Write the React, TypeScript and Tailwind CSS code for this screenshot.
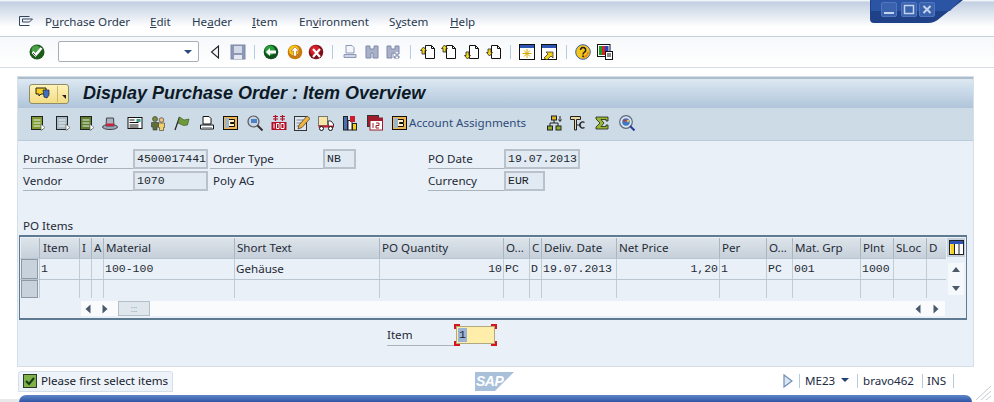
import type { ReactNode } from 'react';

const Svg = ({ children, className = '', w = 16, h = 16 }: { children: ReactNode; className?: string; w?: number; h?: number }) => (
  <svg width={w} height={h} viewBox={`0 0 ${w} ${h}`} className={`shrink-0 ${className}`} shapeRendering="geometricPrecision">
    {children}
  </svg>
);

const Sep = ({ className = '' }: { className?: string }) => <div className={`w-px h-[14px] bg-[#b5cbe0] shrink-0 ${className}`} />;

// standard toolbar
const CheckIcon = ({ className }: { className?: string }) => (
  <Svg className={className}>
    <circle cx="8" cy="8" r="7.5" fill="#1c5b1c" />
    <circle cx="7" cy="6" r="4.5" fill="#49a049" />
    <path d="M3.5 8l3 3 6-7" fill="none" stroke="#fff" strokeWidth="2.6" />
    <path d="M4 9l2.6 2.6" stroke="#111" strokeWidth="0.8" />
  </Svg>
);
const BackTri = ({ className }: { className?: string }) => (
  <Svg className={className} w={10} h={14}>
    <path d="M8.5 1v12L1.5 7z" fill="#f4f6f8" stroke="#222" strokeWidth="1.1" />
  </Svg>
);
const SaveIcon = ({ className }: { className?: string }) => (
  <Svg className={className}>
    <rect x="1" y="1" width="14" height="14" fill="#8d98b8" stroke="#7f89aa" />
    <rect x="4" y="2" width="8" height="7" fill="#d4d9e8" />
    <rect x="4" y="11" width="8" height="4" fill="#e6e9f2" />
  </Svg>
);
const RoundIcon = ({ fill, dark, className, children }: { fill: string; dark: string; className?: string; children: ReactNode }) => (
  <Svg className={className}>
    <circle cx="8" cy="8" r="7.3" fill={dark} />
    <circle cx="7" cy="6.5" r="5" fill={fill} />
    {children}
  </Svg>
);
const PrintGray = ({ className }: { className?: string }) => (
  <Svg className={className}>
    <path d="M4 1.5h6l2 2V9H4z" fill="#f4f6fa" stroke="#8d98b8" />
    <path d="M2 10.5h12v3H2z" fill="#cfd5e4" stroke="#8d98b8" />
  </Svg>
);
const Binoc = ({ plus, className }: { plus?: boolean; className?: string }) => (
  <Svg className={className}>
    <path d="M2 2h4v3h4V2h4v12h-5V9H7v5H2z" fill="#a9b1c9" stroke="#7f89aa" />
    {plus && <path d="M12 8v6M9 11h6" stroke="#fff" strokeWidth="2" />}
    {plus && <path d="M12 9v4M10 11h4" stroke="#7f89aa" strokeWidth="1" />}
  </Svg>
);
const PageIcon = ({ dy, down, className }: { dy: number; down?: boolean; className?: string }) => (
  <Svg className={className}>
    <path d="M5.5 1.5h6l3 3v10h-9z" fill="#fff" stroke="#111" />
    <path d="M11.5 1.5v3h3" fill="none" stroke="#111" />
    <path
      d={down ? `M3.5 ${dy + 7}L6.5 ${dy + 3.5}H5V${dy}H2V${dy + 3.5}H0.5z` : `M3.5 ${dy}L6.5 ${dy + 3.5}H5V${dy + 7}H2V${dy + 3.5}H0.5z`}
      fill="#f5d818"
      stroke="#222"
      strokeWidth="0.8"
    />
  </Svg>
);
const WinIcon = ({ children, className }: { children: ReactNode; className?: string }) => (
  <Svg className={className}>
    <rect x="0.5" y="0.5" width="15" height="15" fill="#fff" stroke="#111" />
    <rect x="1" y="1" width="14" height="3" fill="#2f55b4" />
    {children}
  </Svg>
);
const HelpIcon = ({ className }: { className?: string }) => (
  <Svg className={className}>
    <circle cx="8" cy="8" r="7.3" fill="#f5c518" stroke="#3b5fb0" />
    <path d="M8 14a6 6 0 0 0 6-6h-2a4 4 0 0 1-4 4z" fill="#e8891c" />
    <path d="M5.5 6a2.6 2.6 0 1 1 4 2.2C8.4 9 8 9.400 8 10.500" fill="none" stroke="#222" strokeWidth="1.5" />
    <rect x="7.200" y="11.500" width="1.600" height="1.600" fill="#222" />
  </Svg>
);
const ColorIcon = ({ className }: { className?: string }) => (
  <Svg className={className}>
    <rect x="0.5" y="0.5" width="12.500" height="12" fill="#fff" stroke="#111" />
    <rect x="2" y="2" width="3" height="9" fill="#1b9b2b" />
    <rect x="5" y="2" width="3" height="9" fill="#d7261e" />
    <rect x="8" y="2" width="3.500" height="9" fill="#2443c8" />
    <rect x="8.500" y="7.500" width="7" height="8" fill="#fff" stroke="#111" />
    <path d="M10 10h4M10 12h4" stroke="#111" />
  </Svg>
);

// application toolbar
const ListIcon = ({ tone, className }: { tone: string; className?: string }) => (
  <Svg className={className}>
    <rect x="1.500" y="1.500" width="11" height="13" fill={tone} stroke="#222" />
    <path d="M3.500 5h7M3.500 8h7M3.500 11h7" stroke="#eef3e4" />
    <path d="M11 9l4 3.500-4 3z" fill="#fff" stroke="#666" strokeWidth="0.7" />
  </Svg>
);
const Hat = ({ className }: { className?: string }) => (
  <Svg className={className}>
    <ellipse cx="8" cy="12" rx="7.500" ry="2.500" fill="#9ba6b8" stroke="#444" />
    <path d="M4.500 3h7l.5 8H4z" fill="#aab3c2" stroke="#444" />
    <rect x="4" y="8.500" width="8" height="2.500" fill="#c2263a" />
  </Svg>
);
const Mail = ({ className }: { className?: string }) => (
  <Svg className={className}>
    <rect x="1" y="2.500" width="14" height="11" fill="#fff" stroke="#111" />
    <rect x="9.500" y="4" width="4" height="3" fill="#3d9a8a" />
    <path d="M2.500 5h5M2.500 7.500h9M2.500 10h9M2.500 12h9" stroke="#111" />
  </Svg>
);
const People = ({ className }: { className?: string }) => (
  <Svg className={className}>
    <circle cx="5" cy="4" r="2.500" fill="#7c8a3c" stroke="#333" strokeWidth="0.6" />
    <path d="M1.500 7.500h7V12H7v3H3v-3H1.500z" fill="#5f6f38" stroke="#333" strokeWidth="0.6" />
    <circle cx="11.500" cy="5" r="2.300" fill="#f0c080" stroke="#333" strokeWidth="0.6" />
    <path d="M8.500 8h6v4.500h-1V15.500h-4v-3h-1z" fill="#f1cf6a" stroke="#333" strokeWidth="0.6" />
  </Svg>
);
const Flag = ({ className }: { className?: string }) => (
  <Svg className={className}>
    <path d="M1 15L5.500 2" stroke="#222" strokeWidth="1.200" />
    <path d="M5.500 2l4.500 3 5-1-1.500 6-4 .5L4 8z" fill="#6f9a3c" stroke="#3e5e20" strokeWidth="0.7" />
  </Svg>
);
const Printer = ({ className }: { className?: string }) => (
  <Svg className={className}>
    <path d="M4 1.500h6l2 2V9H4z" fill="#fff" stroke="#111" />
    <path d="M1.500 10h13v4h-13z" fill="#fff" stroke="#111" />
    <path d="M3 12.500h10" stroke="#9aa7b5" />
  </Svg>
);
const Bracket = ({ className }: { className?: string }) => (
  <Svg className={className}>
    <rect x="0.500" y="1.500" width="14" height="13" fill="#f0b550" stroke="#111" />
    <rect x="2" y="3" width="4" height="10" fill="#9fb4c8" />
    <path d="M6 4.500h5.500v3H7.500v1h4v3H6" fill="#fff1c4" stroke="#111" />
  </Svg>
);
const Magnifier = ({ className }: { className?: string }) => (
  <Svg className={className}>
    <circle cx="6.500" cy="6.500" r="5.500" fill="#c8d4e4" stroke="#555" strokeWidth="1.200" />
    <rect x="4" y="4" width="6" height="4" fill="#4a82c8" />
    <path d="M10.500 10.500l5 5" stroke="#333" strokeWidth="2" />
  </Svg>
);
const Money = ({ className }: { className?: string }) => (
  <Svg className={className}>
    <path d="M2 1.500h5M2 4h5M4.500 0v6M9 1.500h5M9 4h5M11.500 0v6" stroke="#b01025" strokeWidth="1.200" />
    <rect x="0.500" y="7" width="15" height="8" fill="#b01025" />
    <path d="M3 8.500v5M5.500 8.500h2.500v5H5.500zM10 8.500h3v5h-3z" fill="none" stroke="#fff" />
  </Svg>
);
const Pencil = ({ className }: { className?: string }) => (
  <Svg className={className}>
    <rect x="0.500" y="1.500" width="12" height="14" fill="#dfe6ee" stroke="#333" />
    <path d="M2.500 5h7M2.500 8h5M2.500 11h3" stroke="#7a8a9a" />
    <path d="M4 14l1-4 8-9 3 2.500-8 9z" fill="#f2b23c" stroke="#333" strokeWidth="0.7" />
  </Svg>
);
const Truck = ({ className }: { className?: string }) => (
  <Svg className={className}>
    <rect x="0.500" y="1.500" width="9" height="9" fill="#f6e6a6" stroke="#777" />
    <path d="M10 6h3l2.500 3v3h-5z" fill="#fff" stroke="#333" />
    <rect x="0.500" y="10.500" width="15" height="2" fill="#c91c2c" />
    <circle cx="3.500" cy="13.500" r="2" fill="#fff" stroke="#111" />
    <circle cx="12.500" cy="13.500" r="2" fill="#fff" stroke="#111" />
  </Svg>
);
const Chart = ({ className }: { className?: string }) => (
  <Svg className={className}>
    <rect x="0.500" y="1.500" width="4" height="13.500" fill="#4a6fb0" stroke="#222" />
    <rect x="5" y="5.500" width="4" height="9.500" fill="#fff" stroke="#222" />
    <rect x="9.500" y="8.500" width="4" height="6.500" fill="#f2d018" stroke="#222" />
    <rect x="7" y="1" width="5" height="6" fill="#c91c2c" />
  </Svg>
);
const Calendar = ({ className }: { className?: string }) => (
  <Svg className={className}>
    <rect x="0.500" y="0.500" width="11" height="11" fill="#a01c2c" stroke="#333" />
    <rect x="3" y="3" width="12.500" height="12" fill="#fff" stroke="#a01c2c" />
    <rect x="3" y="3" width="12.500" height="3" fill="#a01c2c" />
    <path d="M6 8v5M9 8h3v2.500H9V13h3" fill="none" stroke="#a01c2c" />
  </Svg>
);
const Hierarchy = ({ className }: { className?: string }) => (
  <Svg className={className}>
    <rect x="4.500" y="1" width="5" height="4" fill="#e0b020" stroke="#222" />
    <path d="M7 5v3M3 11V8h8v3" fill="none" stroke="#222" />
    <rect x="0.500" y="11" width="5" height="4" fill="#8fae30" stroke="#222" />
    <rect x="9" y="11" width="5" height="4" fill="#8fae30" stroke="#222" />
    <path d="M13 1v5M11.500 4.500l1.500 2 1.500-2" fill="none" stroke="#222" />
  </Svg>
);
const Tool = ({ className }: { className?: string }) => (
  <Svg className={className}>
    <path d="M0.500 1.500h10v3h-4v10.500h-2V4.500h-4z" fill="#e8d8a0" stroke="#222" />
    <path d="M14.500 7.500a3 3 0 1 0 0 5" fill="none" stroke="#222" strokeWidth="1.400" />
    <path d="M7 10h4" stroke="#222" />
  </Svg>
);
const Sigma = ({ className }: { className?: string }) => (
  <Svg className={className} w={14} h={14}>
    <path d="M1 1h12v4h-2V3.500H6L9 7l-3 3.500h5V9h2v4H1V11l4-4-4-4z" fill="#9ab82c" stroke="#222" strokeWidth="0.8" />
  </Svg>
);
const Lens = ({ className }: { className?: string }) => (
  <Svg className={className}>
    <circle cx="7" cy="7" r="6.300" fill="#dde6f0" stroke="#5a6a7a" strokeWidth="1.200" />
    <circle cx="7" cy="7" r="3.800" fill="#3f78c8" />
    <circle cx="5.500" cy="5.500" r="1.300" fill="#d4303a" />
    <circle cx="9" cy="6" r="1.200" fill="#f0c020" />
    <path d="M11 11l4.500 4.500" stroke="#2a3a9a" strokeWidth="2" />
  </Svg>
);

const mono = "font-['Liberation_Mono',monospace] text-[11.500px]";

const Field = ({ value, className = '' }: { value: string; className?: string }) => (
  <div className={`h-[20px] flex items-center pl-[2px] border-2 border-[#b9c2ca] bg-[#e1eaf2] ${mono} text-[#20262c] shrink-0 ${className}`}>
    {value}
  </div>
);

const Label = ({ text, className = '' }: { text: string; className?: string }) => (
  <div className={`h-[20px] flex items-center border-b border-[#aab4bd] text-[#1f2a36] shrink-0 ${className}`}>{text}</div>
);

const columns = [
  { head: 'Item', w: 40, pl: 'pl-[3px]', val: '1', valClass: `pl-[1px] ${mono}` },
  { head: 'I', w: 12, pl: 'pl-[2px]', val: '', valClass: '' },
  { head: 'A', w: 12, pl: 'pl-[2px]', val: '', valClass: '' },
  { head: 'Material', w: 131, pl: 'pl-[2px]', val: '100-100', valClass: `pl-[1px] ${mono}` },
  { head: 'Short Text', w: 145, pl: 'pl-[2px]', val: 'Gehäuse', valClass: 'pl-[1px]' },
  { head: 'PO Quantity', w: 124, pl: 'pl-[2px]', val: '10', valClass: `justify-end pr-[1px] ${mono}` },
  { head: 'O...', w: 26, pl: 'pl-[2px]', val: 'PC', valClass: `pl-[1px] ${mono}` },
  { head: 'C', w: 12, pl: 'pl-[2px]', val: 'D', valClass: `pl-[1px] ${mono}` },
  { head: 'Deliv. Date', w: 75, pl: 'pl-[2px]', val: '19.07.2013', valClass: `pl-[1px] ${mono}` },
  { head: 'Net Price', w: 103, pl: 'pl-[2px]', val: '1,20', valClass: `justify-end pr-[1px] ${mono}` },
  { head: 'Per', w: 47, pl: 'pl-[2px]', val: '1', valClass: `pl-[1px] ${mono}` },
  { head: 'O...', w: 26, pl: 'pl-[2px]', val: 'PC', valClass: `pl-[1px] ${mono}` },
  { head: 'Mat. Grp', w: 68, pl: 'pl-[2px]', val: '001', valClass: `pl-[1px] ${mono}` },
  { head: 'Plnt', w: 33, pl: 'pl-[2px]', val: '1000', valClass: `pl-[1px] ${mono}` },
  { head: 'SLoc', w: 33, pl: 'pl-[2px]', val: '', valClass: '' },
  { head: 'D', w: 20, pl: 'pl-[2px]', val: '', valClass: '' },
];

const Corner = ({ className }: { className: string }) => <div className={`absolute w-[6px] h-[5px] border-[#d8141c] ${className}`} />;

const TriRight = ({ className = '' }: { className?: string }) => (
  <svg width="6" height="10" viewBox="0 0 6 10" className={`shrink-0 ${className}`}><path d="M0.500 0.500L5.500 5 0.500 9.500z" fill="#4a5a6a" /></svg>
);
const TriLeft = ({ className = '' }: { className?: string }) => (
  <svg width="6" height="10" viewBox="0 0 6 10" className={`shrink-0 ${className}`}><path d="M5.500 0.500L0.500 5 5.500 9.500z" fill="#4a5a6a" /></svg>
);

export default function App() {
  return (
    <div className="w-[994px] h-[402px] overflow-hidden relative bg-white font-['Noto_Sans',sans-serif] text-[11.600px] text-[#1f2a36]">
      {/* Window controls */}
      <svg width="100" height="26" viewBox="0 0 100 26" className="absolute left-[868px] top-0">
        <path d="M2 0v19q0 4 4 4h54q7 0 12-5L95 0z" fill="#1f4188" />
        <path d="M3 0v11h79L92 0z" fill="#2b55a4" />
        <rect x="13.500" y="2.500" width="15" height="14" rx="1.500" fill="#3b62ad" stroke="#4f76bf" />
        <rect x="33.500" y="2.500" width="15" height="14" rx="1.500" fill="#3b62ad" stroke="#4f76bf" />
        <rect x="51.500" y="2.500" width="15" height="14" rx="1.500" fill="#3b62ad" stroke="#4f76bf" />
        <rect x="16" y="12" width="10" height="2" fill="#c4d4ec" />
        <rect x="36.500" y="5.500" width="9" height="8" fill="none" stroke="#c4d4ec" strokeWidth="1.500" />
        <path d="M55.500 6l7 7M62.500 6l-7 7" stroke="#c4d4ec" strokeWidth="2" />
      </svg>

      {/* Menu bar */}
      <div className="h-[37px] border-b border-[#c5d0dc] bg-gradient-to-b from-[#ffffff] via-[#c3d0e2] via-[6%] to-[#ffffff] to-[75%] flex items-end pb-[8px] pl-[18px]">
        <svg width="16" height="12" viewBox="0 0 16 12" className="mb-[1px]">
          <path d="M1.500 1.500h10M1.500 1.500v9h10M4.500 4h10l-3 3H4.500z" fill="none" stroke="#34465c" />
        </svg>
        <div className="flex gap-[21px] ml-[11px] text-[#2a3a50] leading-none">
          <span className="w-[84px] whitespace-nowrap">P<u>u</u>rchase Order</span>
          <span className="w-[21px]"><u>E</u>dit</span>
          <span className="w-[39px]">He<u>a</u>der</span>
          <span className="w-[26px]"><u>I</u>tem</span>
          <span className="w-[69px]">En<u>v</u>ironment</span>
          <span className="w-[40px]">S<u>y</u>stem</span>
          <span><u>H</u>elp</span>
        </div>
      </div>

      {/* Standard toolbar */}
      <div className="h-[31px] border-b border-[#d8dde3] bg-gradient-to-b from-[#f6f8fb] to-white flex items-center pl-[29px] pb-[1px]">
        <CheckIcon />
        <div className="ml-[13px] w-[141px] h-[21px] bg-white border border-[#a8aeb4] rounded-[2px] flex items-center justify-end pr-[6px] shrink-0">
          <div className="w-0 h-0 border-l-[4px] border-r-[4px] border-t-[4px] border-l-transparent border-r-transparent border-t-[#2a4a80]" />
        </div>
        <BackTri className="ml-[11px]" />
        <SaveIcon className="ml-[10px]" />
        <Sep className="ml-[8px]" />
        <RoundIcon className="ml-[8px]" fill="#29a03a" dark="#10501c"><path d="M3 8l4-4v2.500h6v3H7V12z" fill="#fff" /></RoundIcon>
        <RoundIcon className="ml-[8px]" fill="#f5c518" dark="#c87a10"><path d="M8 3l4 4H9.500v5h-3V7H4z" fill="#fff" stroke="#a05010" strokeWidth="0.500" /></RoundIcon>
        <RoundIcon className="ml-[5px]" fill="#d81e28" dark="#801018"><path d="M5 5l7 8M12 5l-7 8" stroke="#fff" strokeWidth="2.200" /></RoundIcon>
        <Sep className="ml-[8px]" />
        <PrintGray className="ml-[9px]" />
        <Binoc className="ml-[6px]" />
        <Binoc plus className="ml-[5px]" />
        <Sep className="ml-[9px]" />
        <PageIcon className="ml-[9px]" dy={3} />
        <PageIcon className="ml-[5px]" dy={1} />
        <PageIcon className="ml-[7px]" dy={8} down />
        <PageIcon className="ml-[6px]" dy={5} down />
        <Sep className="ml-[8px]" />
        <WinIcon className="ml-[8px]">
          <path d="M8 5v9M3.500 9.500h9M5 6.500l6 6M11 6.500l-6 6" stroke="#d8a800" />
        </WinIcon>
        <WinIcon className="ml-[6px]">
          <path d="M3 14l1-1 3-3-2-2h7v6l-2-2-4 4z" fill="#f2d018" stroke="#222" strokeWidth="0.700" />
        </WinIcon>
        <Sep className="ml-[9px]" />
        <HelpIcon className="ml-[8px]" />
        <ColorIcon className="ml-[6px]" />
      </div>

      {/* Main panel */}
      <div className="absolute left-[17px] top-[76px] w-[957px] h-[291px] bg-[#e9f0f7] border border-[#d4dfea] flex flex-col">
        <div className="h-[31px] shrink-0 border-t-2 border-[#aebdcc] bg-gradient-to-b from-[#dde8f2] to-[#afc5da] flex items-center pl-[11px]">
          <div className="w-[40px] h-[20px] bg-gradient-to-b from-[#fff3b8] to-[#f3dc84] border border-[#8f8c6a] rounded-[3px] flex items-center shrink-0">
            <svg width="26" height="16" viewBox="0 0 16 16" className="shrink-0">
              <path d="M1 2h10v6H6l-2 2V8H1z" fill="#f5d020" stroke="#222" />
              <path d="M8 4h6v5l-2 3-3-1z" fill="#3f6fc0" stroke="#222" strokeWidth="0.700" />
            </svg>
            <div className="w-px h-[16px] bg-[#c4b878] ml-[1px]" />
            <div className="ml-[4px] mt-[7px] w-0 h-0 border-l-[4px] border-t-[4px] border-l-transparent border-t-[#222]" />
          </div>
          <div className="ml-[14px] font-['Liberation_Sans',sans-serif] font-bold italic text-[18px] text-[#0d1a26] whitespace-nowrap">
            Display Purchase Order : Item Overview
          </div>
        </div>
        <div className="h-[33px] shrink-0 border-b border-[#bccbd9] bg-[#cddbe7] flex items-center pl-[12px] pb-[2px]">
          <ListIcon tone="#7f9a30" />
          <ListIcon tone="#a7b9c9" className="ml-[9px]" />
          <ListIcon tone="#5e7f30" className="ml-[8px]" />
          <Hat className="ml-[7px]" />
          <Mail className="ml-[9px]" />
          <People className="ml-[7px]" />
          <Flag className="ml-[8px]" />
          <Printer className="ml-[9px]" />
          <Bracket className="ml-[8px]" />
          <Magnifier className="ml-[8px]" />
          <Money className="ml-[8px]" />
          <Pencil className="ml-[7px]" />
          <Truck className="ml-[8px]" />
          <Chart className="ml-[9px]" />
          <Calendar className="ml-[8px]" />
          <Bracket className="ml-[9px]" />
          <span className="ml-[1px] w-[118px] shrink-0 text-[#2f4c78] whitespace-nowrap">Account Assignments</span>
          <Hierarchy className="ml-[20px]" />
          <Tool className="ml-[7px]" />
          <Sigma className="ml-[9px]" />
          <Lens className="ml-[10px]" />
        </div>

        {/* Header fields */}
        <div className="pl-[5px] pt-[8px] flex flex-col gap-[2px]">
          <div className="flex items-center">
            <Label text="Purchase Order" className="w-[110px]" />
            <Field value="4500017441" className="w-[75px]" />
            <Label text="Order Type" className="w-[113px] pl-[3px] ml-[2px]" />
            <Field value="NB" className="w-[33px]" />
            <Label text="PO Date" className="w-[76px] ml-[72px]" />
            <Field value="19.07.2013" className="w-[76px]" />
          </div>
          <div className="flex items-center">
            <Label text="Vendor" className="w-[110px]" />
            <Field value="1070" className="w-[75px]" />
            <div className="w-[220px] pl-[5px] shrink-0">Poly AG</div>
            <Label text="Currency" className="w-[76px]" />
            <Field value="EUR" className="w-[41px]" />
          </div>
        </div>

        <div className="pl-[5px] mt-[27px] h-[16px] leading-[16px]">PO Items</div>

        {/* Table */}
        <div className="ml-[1px] mt-[1px] w-[948px] h-[85px] border-y-2 border-x border-[#5d7a90] flex">
          <div className="w-[926px] shrink-0 flex flex-col pt-[1px]">
            <div className="flex h-[21px] border-b border-[#b9c6d2]">
              <div className="w-[18px] ml-[1px] bg-gradient-to-b from-[#dde4ea] to-[#c6d0da] shrink-0" />
              {columns.map((c) => (
                <div key={c.head + c.w} style={{ width: c.w }} className={`shrink-0 h-full border-l border-[#a9b6c2] bg-gradient-to-b from-[#dde4ea] to-[#c6d0da] flex items-center ${c.pl} whitespace-nowrap overflow-hidden`}>
                  {c.head}
                </div>
              ))}
            </div>
            <div className="flex h-[21px] border-b border-[#b9c6d2]">
              <div className="w-[17px] ml-[1px] mr-[1px] bg-[#c8d2dc] border border-[#8d9aa6] shrink-0" />
              {columns.map((c) => (
                <div key={c.head + c.w} style={{ width: c.w }} className={`shrink-0 h-full border-l border-[#c0ccd7] flex items-center whitespace-nowrap ${c.valClass}`}>
                  {c.val}
                </div>
              ))}
            </div>
            <div className="flex h-[18px]">
              <div className="w-[17px] ml-[1px] mr-[1px] bg-[#c8d2dc] border border-[#8d9aa6] shrink-0" />
              {columns.map((c) => (
                <div key={c.head + c.w} style={{ width: c.w }} className="shrink-0 h-full border-l border-[#c0ccd7]" />
              ))}
            </div>
            {/* Horizontal scrollbar */}
            <div className="mt-[3px] ml-[61px] h-[15px] w-[864px] bg-[#f9fbfd] flex items-center pr-[6px]">
              <TriLeft className="ml-[4px]" />
              <TriRight className="ml-[11px]" />
              <div className="ml-[10px] w-[32px] h-[15px] bg-[#dfe6ec] border border-[#b4bec8] flex items-center justify-center text-[8px] leading-none text-[#8a96a2]">:::</div>
              <div className="flex-1" />
              <TriLeft />
              <TriRight className="ml-[12px]" />
            </div>
          </div>
          {/* Column config + vertical scrollbar */}
          <div className="flex-1 flex flex-col items-center pt-[1px]">
            <div className="w-[18px] h-[19px] bg-[#c6d0da] flex items-center justify-center">
              <svg width="15" height="15" viewBox="0 0 15 15">
                <rect x="0.500" y="0.500" width="14" height="14" fill="#fff" stroke="#222" />
                <rect x="1" y="1" width="13" height="3" fill="#2f55b4" />
                <rect x="1.500" y="4" width="3.500" height="10" fill="#f5d020" />
                <path d="M5.500 4v10M10 4v10" stroke="#222" />
              </svg>
            </div>
            <div className="mt-[6px] w-[16px] h-[32px] bg-[#f6f9fb] flex flex-col items-center justify-between py-[4px]">
              <div className="w-0 h-0 border-l-[4px] border-r-[4px] border-b-[5px] border-l-transparent border-r-transparent border-b-[#4a5a6a]" />
              <div className="w-0 h-0 border-l-[4px] border-r-[4px] border-t-[5px] border-l-transparent border-r-transparent border-t-[#4a5a6a]" />
            </div>
          </div>
        </div>

        {/* Item position */}
        <div className="mt-[5px] ml-[369px] flex items-center h-[20px]">
          <Label text="Item" className="w-[67px] h-[18px] mt-[1px]" />
          <div className="relative ml-[2px] w-[39px] h-[18px] bg-[#ffeeaa] border border-[#b0aa80] flex items-center">
            <span className={`${mono} ml-[1px] bg-[#9bb4d4] text-[#1a2030] px-[1px] leading-[14px]`}>1</span>
            <Corner className="-left-[3px] -top-[3px] border-l-2 border-t-2" />
            <Corner className="-right-[3px] -top-[3px] border-r-2 border-t-2" />
            <Corner className="-left-[3px] -bottom-[3px] border-l-2 border-b-2" />
            <Corner className="-right-[3px] -bottom-[3px] border-r-2 border-b-2" />
          </div>
        </div>
      </div>

      {/* Status bar */}
      <div className="absolute left-0 top-[370px] w-full h-[22px] flex items-center">
        <div className="ml-[18px] w-[155px] h-[21px] bg-[#edf3f9] border border-[#d3dee8] rounded-t-[3px] flex items-center pl-[4px]">
          <svg width="14" height="14" viewBox="0 0 14 14">
            <rect x="0.500" y="0.500" width="13" height="13" fill="#7fb04a" stroke="#2a3a2a" />
            <path d="M3 7l3 3 5-6" fill="none" stroke="#123a12" strokeWidth="2" />
          </svg>
          <span className="ml-[4px] text-[#18222c] whitespace-nowrap">Please first select items</span>
        </div>
        <div className="ml-[302px] relative w-[39px] h-[20px] overflow-hidden">
          <svg width="39" height="20" viewBox="0 0 39 20" className="absolute inset-0">
            <path d="M0 1h39L20 20H0z" fill="#a8c0da" />
          </svg>
          <span className="absolute left-[1px] top-[3px] font-['Liberation_Sans',sans-serif] font-bold italic text-[14px] leading-[15px] text-white tracking-[-0.500px]">SAP</span>
        </div>
        <svg width="10" height="14" viewBox="0 0 10 14" className="ml-[269px] shrink-0">
          <path d="M1 1l8 6-8 6z" fill="#dbe6f1" stroke="#6e8fb5" strokeWidth="1.200" />
        </svg>
        <Sep className="ml-[6px]" />
        <span className="ml-[5px] w-[30px] shrink-0 text-[#1a2a44]">ME23</span>
        <div className="ml-[6px] mb-[3px] w-0 h-0 border-l-[4px] border-r-[4px] border-t-[4px] border-l-transparent border-r-transparent border-t-[#24406e]" />
        <Sep className="ml-[8px]" />
        <span className="ml-[5px] w-[50px] shrink-0 text-[#1a2a44]">bravo462</span>
        <Sep className="ml-[9px]" />
        <span className="ml-[4px] w-[19px] shrink-0 text-[#1a2a44]">INS</span>
        <Sep className="ml-[7px]" />
      </div>

      {/* Footer strip */}
      <div className="absolute left-0 top-[399px] w-[19px] h-[3px] bg-[#e6e8ea]" />
      <div className="absolute left-[19px] top-[395px] w-[953px] h-[7px] rounded-t-[8px] bg-gradient-to-b from-[#5f86c8] to-[#2f55a4]" />
      <svg width="18" height="16" viewBox="0 0 18 16" className="absolute left-[975px] top-[385px]">
        <path d="M1 15L16 1M6 15L16 6M11 15L16 11" stroke="#c5ccd4" />
      </svg>
    </div>
  );
}
